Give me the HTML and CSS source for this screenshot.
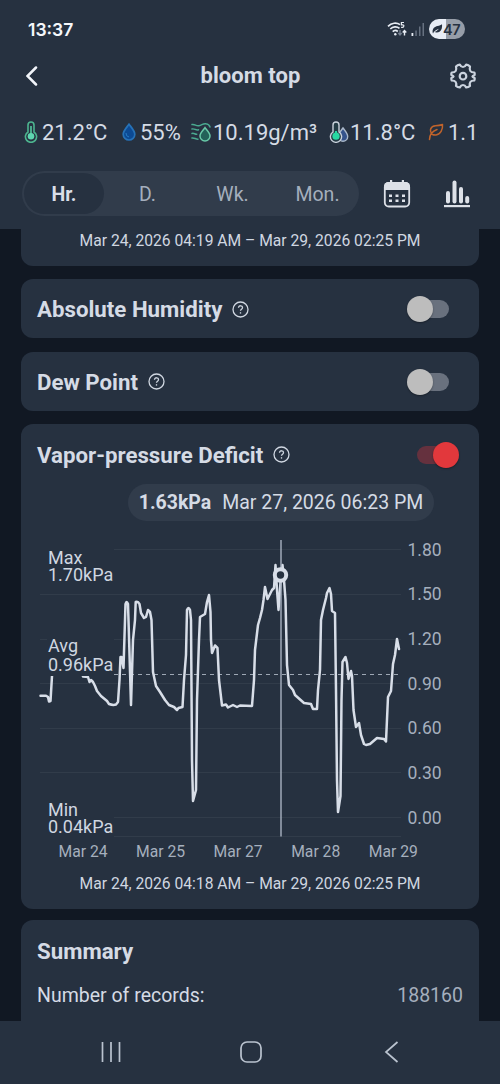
FILE: index.html
```html
<!DOCTYPE html>
<html lang="en">
<head>
<meta charset="utf-8">
<title>bloom top</title>
<link rel="stylesheet" href="styles.css">
</head>
<body>
<div class="app">
  <header class="top">
    <div class="status">
      <span class="clock">13:37</span>
      <div class="status-icons">
        <svg class="wifi" width="20" height="16" viewBox="0 0 20 16" fill="none" stroke="#e8edf4" stroke-width="1.7">
          <path d="M1 5.3C4.5 1.8 9.500 1.300 13 3.600M3.300 8C5.800 5.500 9.800 5.200 12.500 7.300M5.700 10.700C7.200 9.200 9.300 9.200 10.800 10.500"/>
          <circle cx="8.300" cy="13.300" r="1.200" fill="#e8edf4" stroke="none"/>
          <path d="M17 1.500h-2.600v2.300h1.200c1.700 0 1.700 2.600-.2 2.600h-1.300" stroke-width="1.200"/>
          <path d="M13 9v5m-1.700-2 1.700 2 1.700-2" stroke="#778292" stroke-width="1.300"/>
          <path d="M17.500 14.500v-5m-1.800 2 1.800-2 1.800 2" stroke-width="1.400"/>
        </svg>
        <svg class="signal" width="14" height="14" viewBox="0 0 14 14">
          <path d="M.5 11h1.800v3H.5z" fill="#e8edf4"/>
          <path d="M4.300 8.500h1.500V14H4.300zM8 4.500h1.500V14H8zM11.500 1H13v13h-1.500z" fill="#667180"/>
        </svg>
        <div class="battery">
          <svg width="11" height="10" viewBox="0 0 11 10"><path d="M1 9.500C-.5 6 2 2.500 5.500 2 7.500 1.700 9 1.200 10 .3c.5 4.500-1.300 8-5 8.200-1.200.1-1.800-.2-2.500-.5 1.500-.8 3.200-1.700 4.500-3.300C4.500 5.500 2 6.800 1 9.500z" fill="#263140"/></svg>
          <span>47</span>
        </div>
      </div>
    </div>
    <div class="titlebar">
      <svg width="12" height="20" viewBox="0 0 12 20" fill="none" stroke="#f2f5fa" stroke-width="2.500" stroke-linecap="round"><path d="M10 1.500 1.500 10l8.500 8.500"/></svg>
      <h1>bloom top</h1>
      <svg width="28" height="28" viewBox="0 0 28 28" fill="none" stroke="#cbd3de" stroke-width="2.200" stroke-linejoin="round">
        <path d="M10.800 2.500Q12 5 14 5t3.200-2.500Q19.500 3 21 4.500 20.300 7.500 21.300 9t4.100 1.500Q26 12 25.600 13 23.400 14 23.400 14.500t2.200 1.500Q26 17 25.300 18.500 22.300 18.500 21.300 20t-.3 3.800Q19.500 25 17.200 25.500 16 23 14 23t-3.200 2.500Q8.500 25 7 23.800 7.700 21.500 6.700 20t-4-1.500Q2 17 2.400 16 4.600 15 4.600 14.500T2.400 13Q2 12 2.700 10.500 5.700 10.500 6.700 9T7 4.500Q8.500 3 10.800 2.500z"/>
        <circle cx="14" cy="14.200" r="3.300"/>
      </svg>
    </div>
    <div class="readings">
      <div class="reading temp">
        <svg width="14" height="22" viewBox="0 0 14 22" fill="none" stroke="#4db58f" stroke-width="1.600"><path d="M4 11V4a3 3 0 0 1 6 0v7a5.600 5.600 0 1 1-6 0z"/><path d="M7 5v10" stroke="#56c8a0"/><circle cx="7" cy="15.200" r="3.300" fill="#5ed6b0" stroke="none"/></svg>
        <span>21.2°C</span>
      </div>
      <div class="reading hum">
        <svg width="14" height="18" viewBox="0 0 14 18"><path d="M7 1.200C9 4 12.800 8 12.800 11.200a5.800 5.800 0 0 1-11.600 0C1.200 8 5 4 7 1.200z" fill="#0c4a94" stroke="#2672b8" stroke-width="1.700"/><path d="M4 10q-.2 3.500 3 4" stroke="#267cc5" fill="none"/></svg>
        <span>55%</span>
      </div>
      <div class="reading abs">
        <svg width="21" height="20" viewBox="0 0 21 20" fill="none" stroke="#4aaa90" stroke-width="1.500" stroke-linecap="round"><path d="M1 2.500c3-.8 4 2 7 1.200 3-.7 4-2.500 7-2 2.500.3 3.500 1.800 4 3.300M1 7c2.500-.8 4 1.800 6.500.7M1 11.500c2-.7 3 1 4.800.7M1 16c2-.7 4 1.500 6 1.200"/><path d="M14 5.700c1.500 2.300 5 5.300 5 8.300a5 5 0 0 1-10 0c0-3 3.500-6 5-8.300z" fill="#236159" stroke="#69c9a8"/></svg>
        <span>10.19g/m³</span>
      </div>
      <div class="reading dew">
        <svg width="20" height="22" viewBox="0 0 20 22" fill="none" stroke-width="1.400"><path d="M14 7c1.800 2.500 4.700 5.500 4.700 8.500a4.700 4.700 0 0 1-9.400 0C9.300 12.500 12.200 9.500 14 7z" fill="#35538b" stroke="#aab8ca"/><path d="M4 11V4a3 3 0 0 1 6 0v7a5.600 5.600 0 1 1-6 0z" fill="#243b45" stroke="#cad2dc"/><path d="M7 10v5" stroke="#25d5a0" stroke-width="2"/><circle cx="7" cy="15.200" r="3.600" fill="#28d9a3"/></svg>
        <span>11.8°C</span>
      </div>
      <div class="reading vpd">
        <svg width="16" height="18" viewBox="0 0 16 18" fill="none" stroke="#c0632b" stroke-width="1.500" stroke-linecap="round" stroke-linejoin="round"><path d="M4.500 11.500C.5 7 3 3.200 7.500 2.800c3-.2 4.800-.6 7-1.300C15 6.500 12.500 11.500 8 12c-1.500.1-2.500 0-3.500-.5zM1.500 16.500c.2-5 3-8.500 7.500-10"/></svg>
        <span>1.13kPa</span>
      </div>
    </div>
    <div class="controls">
      <div class="tabs"><span class="tab active">Hr.</span><span class="tab">D.</span><span class="tab">Wk.</span><span class="tab">Mon.</span></div>
      <svg class="calendar" width="28" height="30" viewBox="0 0 28 30"><path d="M7 1h2.200v3H7zM18.800 1H21v3h-2.200z" fill="#dde1e8"/><rect x="1.800" y="4" width="24.400" height="23.500" rx="4" fill="none" stroke="#dde1e8" stroke-width="1.800"/><path d="M1 11V7.500A4.500 4.500 0 0 1 5.500 3h17A4.500 4.500 0 0 1 27 7.500V11z" fill="#dde1e8"/><path d="M6 15.500h3v2.600H6zm6.500 0h3v2.600h-3zm6.500 0h3v2.600h-3zM6 20.500h3v2.600H6zm6.500 0h3v2.600h-3zm6.500 0h3v2.600h-3z" fill="#dde1e8"/></svg>
      <svg class="bars" width="26" height="28" viewBox="0 0 26 28" fill="#dde1e8"><rect x="2" y="11" width="4" height="12.500" rx="2"/><rect x="8.500" y=".5" width="4" height="23" rx="2"/><rect x="15" y="7" width="4" height="16.500" rx="2"/><rect x="21.200" y="16" width="4" height="7.500" rx="2"/><path d="M0 25h26v2.200H0z"/></svg>
    </div>
  </header>

  <main class="content">
    <section class="card previous"><p class="range">Mar 24, 2026 04:19 AM – Mar 29, 2026 02:25 PM</p></section>
    <section class="card small">
      <h2>Absolute Humidity</h2>
      <svg class="help" width="17" height="17" viewBox="0 0 17 17"><circle cx="8.500" cy="8.500" r="7.500"/><path d="M6.500 6.800c0-2.800 4.200-2.600 4 0-.1 1.400-2 1.500-2 3"/><path d="M8.500 11.200v1.400"/></svg>
      <span class="toggle"></span>
    </section>
    <section class="card small">
      <h2>Dew Point</h2>
      <svg class="help" width="17" height="17" viewBox="0 0 17 17"><circle cx="8.500" cy="8.500" r="7.500"/><path d="M6.500 6.800c0-2.800 4.200-2.600 4 0-.1 1.400-2 1.500-2 3"/><path d="M8.500 11.200v1.400"/></svg>
      <span class="toggle"></span>
    </section>
    <section class="card chart-card">
      <div class="card-head">
        <h2>Vapor-pressure Deficit</h2>
        <svg class="help" width="17" height="17" viewBox="0 0 17 17"><circle cx="8.500" cy="8.500" r="7.500"/><path d="M6.500 6.800c0-2.800 4.200-2.600 4 0-.1 1.400-2 1.500-2 3"/><path d="M8.500 11.200v1.400"/></svg>
        <span class="toggle on"></span>
      </div>
      <div class="marker"><b>1.63kPa</b><span>Mar 27, 2026 06:23 PM</span></div>
      <svg class="chart" width="458" height="330" viewBox="21 535 458 330">
        <path class="grid" d="M40 549.500H401M40 594.500H401M40 639.500H401M40 683.500H401M40 728.500H401M40 772.500H401M40 817.500H401M40 836.500H401"/>
        <path class="average" d="M114 674.500H401"/>
        <path class="series" d="M40.500 695.700H46L48 697 49 701.500 50.500 701 52 676 54 660 80 660 83 676.500 88 677 89.500 682 91 680 93 682 95 686 97 691 101 696 107 701 109 704Q113 705.500 116 704.500L118 702 119.500 680 120.500 657 121.500 657 123.500 668 125 620 125.500 604Q126.500 600 128 604L128.500 620 131 705 133 640 135 620 135.700 602Q138 601 139.500 604L141 613 144 618 146 617 148 610 150 612 151.500 620 153 672 156 686 160 692 165 700 169 705 174 707 177 710 178.500 708 182.500 707 184 680 186 655 187 610Q188.500 606 190 610L191 620 192 760 193 801 196 790 197 700 199 640 200 617 205 614 207 602 209 595 210.500 612 211 640 212 653 215 645.500 217.500 648 219 680 222 705.500 226 704.500 228 707.500 233 705 237 707 240 705.500 252 706 254 680 255 650 258 625 260 618 262 610 263.500 600 265 587 267.500 599 272 590 274 588 275.500 565 277 590 278.500 610 281 575 282.500 565 284 580 285.500 600 287 665 289 685 293 690 295 695 304 703 311 704 313 709 317 709 318 690 320 670 321 620 323 610 326 598 327 593 329.500 588 331 594 332 611 335 613 336 690 337 780 338 812 340.500 796 341.500 700 342.500 662 345.500 657 347 663 348.500 679 351 671 352 676 353.500 710 356 727 359 723 361 735 364 744 366 745 370 744 377 738 384 739 386 741.500 388 697 391 691 393 664 395 655 397 639 399 649"/>
        <g class="label-back"><rect x="40" y="547" width="74" height="38"/><rect x="47" y="636" width="67" height="40"/><rect x="40" y="802" width="74" height="36"/></g>
        <path class="cursor" d="M281 540V836.500"/>
        <circle class="point" cx="280.500" cy="575" r="5.700"/>
        <g class="stat"><text x="48" y="564">Max</text><text x="48" y="581">1.70kPa</text><text x="48" y="652">Avg</text><text x="48" y="671">0.96kPa</text><text x="48" y="816">Min</text><text x="48" y="833">0.04kPa</text></g>
        <g class="axis-y"><text x="407.500" y="555.500">1.80</text><text x="407.500" y="600">1.50</text><text x="407.500" y="644.500">1.20</text><text x="407.500" y="689.500">0.90</text><text x="407.500" y="734">0.60</text><text x="407.500" y="778.500">0.30</text><text x="407.500" y="823.500">0.00</text></g>
        <g class="axis-x"><text x="83" y="856.500">Mar 24</text><text x="160.500" y="856.500">Mar 25</text><text x="238" y="856.500">Mar 27</text><text x="315.700" y="856.500">Mar 28</text><text x="393.300" y="856.500">Mar 29</text></g>
      </svg>
      <p class="range">Mar 24, 2026 04:18 AM – Mar 29, 2026 02:25 PM</p>
    </section>
    <section class="card summary">
      <h2>Summary</h2>
      <div class="record"><span>Number of records:</span><span class="count">188160</span></div>
    </section>
  </main>

  <nav class="nav">
    <svg width="20" height="20" viewBox="0 0 20 20"><path d="M1.500 0v20M10 0v20M18.500 0v20"/></svg>
    <svg class="home" width="22" height="22" viewBox="0 0 22 22"><rect x="1" y="1" width="20" height="20" rx="6"/></svg>
    <svg width="15" height="22" viewBox="0 0 15 22"><path d="M13.500 1 2 11l11.500 10"/></svg>
  </nav>
</div>
</body>
</html>
```
FILE: styles.css
```css
* { box-sizing: border-box; }
body { margin: 0; background: #111823; font-family: Roboto, sans-serif; color: #d5dbe5; }
h1, h2, p { margin: 0; }
svg { display: block; flex: none; }
.app { width: 500px; height: 1084px; display: flex; flex-direction: column; overflow: hidden; }

.top { height: 229px; flex: none; background: #263140; display: flex; flex-direction: column; }
.status { height: 56px; padding: 2px 35px 0 28px; display: flex; align-items: center; justify-content: space-between; }
.clock { font: 600 17.5px Inter, sans-serif; color: #f4f7fb; }
.status-icons { display: flex; align-items: center; }
.wifi { margin-right: 4px; }
.signal { margin-right: 4px; }
.battery { width: 36px; height: 20px; border-radius: 10px; background: linear-gradient(90deg, #e8edf5 47%, #969da8 47%); display: flex; align-items: center; padding-left: 3px; }
.battery span { font: 600 14.5px Inter, sans-serif; letter-spacing: -.5px; color: #263140; }
.titlebar { height: 40px; padding: 0 23px 0 26px; display: flex; align-items: center; justify-content: space-between; }
.titlebar h1 { font-size: 22px; font-weight: 700; line-height: 28px; padding-left: 14px; letter-spacing: .05px; }
.readings { height: 72px; margin: 0 21px; padding-left: 3px; display: flex; align-items: center; overflow: hidden; }
.reading { display: flex; align-items: center; flex: none; font-size: 22px; }
.temp { width: 98px; gap: 4px; }
.hum { width: 69px; gap: 4px; }
.abs { width: 138px; gap: 1px; }
.dew { width: 99px; gap: 1px; }
.vpd { gap: 4px; letter-spacing: -.1px; }
.controls { display: flex; align-items: center; padding: 3px 30px 0 22px; }
.tabs { width: 337px; height: 45px; padding: 2px 0 2px 2px; border-radius: 23px; background: #313c4b; display: flex; }
.tab { flex: 1; height: 41px; border-radius: 21px; display: flex; align-items: center; justify-content: center; padding-top: 1px; padding-left: 2px; font-size: 19.5px; color: #a5afbd; }
.active { flex: 0 0 80px; padding-left: 0; background: #263140; color: #d9dee8; font-weight: 700; }
.calendar { margin-left: 24px; }
.bars { margin-left: 33px; }

.content { height: 792px; flex: none; padding: 0 21px; overflow: hidden; }
.card { background: #263140; border-radius: 12px; }
.previous { height: 36.700px; border-radius: 0 0 12px 12px; margin-bottom: 13.300px; padding-top: 2px; }
.range { text-align: center; font-size: 15.650px; line-height: 20px; color: #d0d7e1; }
.small { height: 59.400px; margin-bottom: 13.200px; padding: 1px 30px 0 16px; display: flex; align-items: center; }
h2 { font-size: 22.250px; line-height: 28px; font-weight: 700; }
.help { margin-left: 9.500px; fill: none; stroke: #d0d7e1; stroke-width: 1.3; }
.toggle { margin-left: auto; width: 42px; height: 26px; display: grid; align-items: center; }
.toggle::before, .toggle::after { content: ""; grid-area: 1 / 1; }
.toggle::before { width: 32px; height: 18px; border-radius: 9px; background: #69717e; justify-self: end; }
.toggle::after { width: 26px; height: 26px; border-radius: 50%; background: #bdbdbd; box-shadow: 0 1px 2px #0005; }
.toggle.on::before { background: #65313e; justify-self: start; }
.toggle.on::after { background: #e2383c; justify-self: end; }
.chart-card { height: 484.500px; margin-bottom: 11px; padding-top: 16.600px; }
.card-head { height: 28px; padding: 0 20px 0 16px; display: flex; align-items: center; }
.marker { width: 306px; height: 37px; margin: 15.200px 0 14px 107px; padding-top: 1px; border-radius: 19px; background: #313c4b; display: flex; align-items: center; justify-content: center; gap: 11px; font-size: 19.500px; }
.chart-card .range { margin-top: 9px; }
.grid { stroke: #313c4a; }
.average { stroke: #9ea8b5; stroke-dasharray: 4 4; }
.series { fill: none; stroke: #d8dee8; stroke-width: 2.5; stroke-linejoin: round; stroke-linecap: round; }
.label-back { fill: #263140; }
.cursor { stroke: #a9b3c2; stroke-width: 1.4; }
.point { fill: #263140; stroke: #d8dee8; stroke-width: 4; }
.stat { font-size: 18px; fill: #d0d7e1; }
.axis-y { font-size: 17.5px; fill: #a5afbd; }
.axis-x { font-size: 15.700px; fill: #a5afbd; text-anchor: middle; }
.summary { height: 140px; padding: 17px 16px; }
.record { margin-top: 19px; display: flex; justify-content: space-between; font-size: 19.5px; line-height: 24px; }
.count { color: #a5afbd; }

.nav { height: 63px; background: #263140; display: flex; justify-content: space-between; align-items: center; padding: 0 101px 2px; }
.nav svg { fill: none; stroke: #bac3cf; stroke-width: 1.7; }
.home { margin-right: 4px; }
```
